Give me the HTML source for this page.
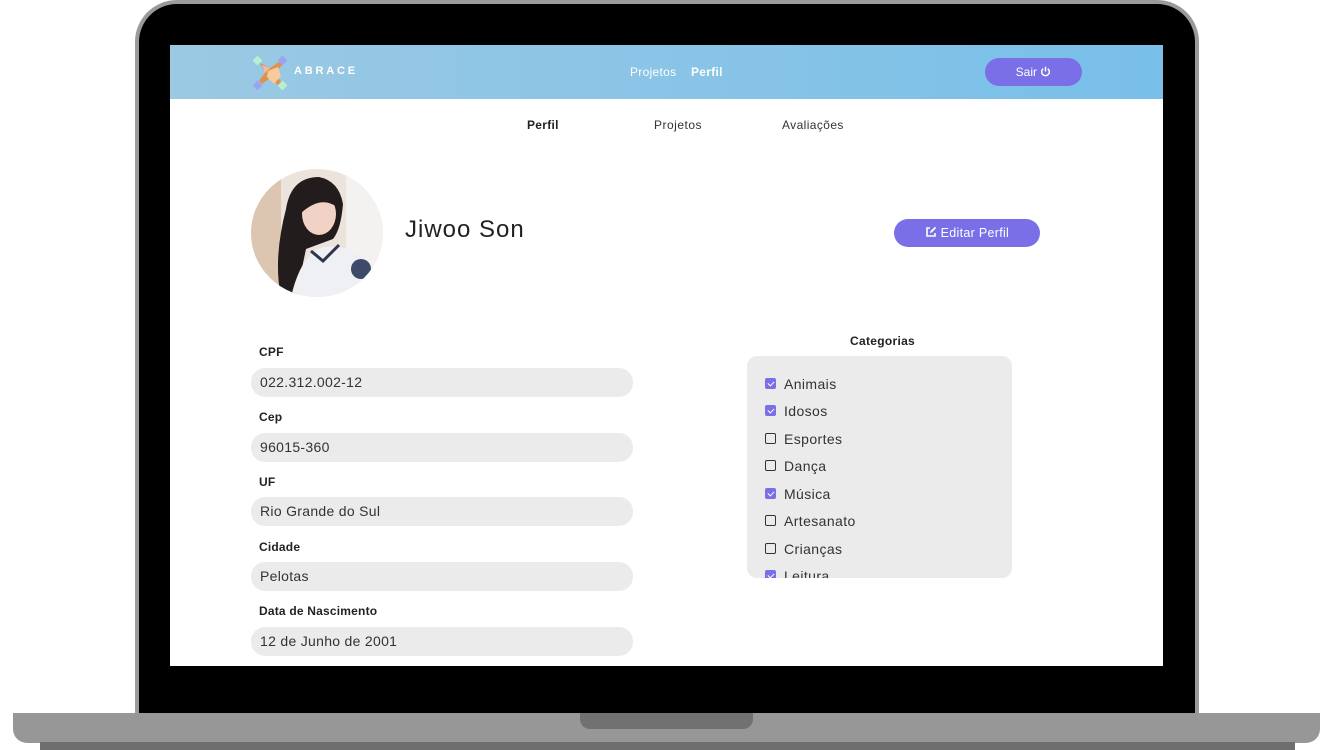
<!DOCTYPE html>
<html><head><meta charset="utf-8"><style>
*{margin:0;padding:0;box-sizing:border-box}
body{width:1333px;height:750px;background:#fff;position:relative;overflow:hidden;font-family:"Liberation Sans",sans-serif;color:#222}
.a{position:absolute}
.lbl{position:absolute;left:259px;font-size:12px;font-weight:bold;color:#222;letter-spacing:0.2px}
.inp{position:absolute;left:251px;width:382px;height:29px;border-radius:14px;background:#ebebeb;font-size:14px;color:#333;padding-left:9px;line-height:29px;letter-spacing:0.3px}
.cb{position:absolute;left:765px;width:11px;height:11px;border:1.5px solid #333;border-radius:2px}
.cb.on{background:#7b6fe8;border-color:#7b6fe8}
.cb.on:after{content:"";position:absolute;left:3px;top:1px;width:3px;height:5px;border:solid #fff;border-width:0 1px 1px 0;transform:rotate(45deg)}
.ct{position:absolute;left:784px;font-size:14px;color:#333;line-height:16px;letter-spacing:0.4px}
</style></head><body>
<div class="a" style="left:135px;top:0;width:1064px;height:720px;background:#9a9a9a;border-radius:42px 42px 0 0"></div>
<div class="a" style="left:139px;top:4px;width:1056px;height:716px;background:#000;border-radius:38px 38px 0 0"></div>
<div class="a" style="left:13px;top:713px;width:1307px;height:30px;background:#979797;border-radius:0 0 14px 14px"></div>
<div class="a" style="left:40px;top:742px;width:1255px;height:8px;background:#6e6e6e"></div>
<div class="a" style="left:580px;top:713px;width:173px;height:16px;background:#717171;border-radius:0 0 10px 10px"></div>
<div class="a" style="left:170px;top:45px;width:993px;height:621px;background:#fff;overflow:hidden">
 <div class="a" style="left:0;top:0;width:993px;height:54px;background:linear-gradient(90deg,#9bc9e3,#78bfe9)"></div>
</div>
<svg class="a" style="left:253px;top:56px" width="34" height="34" viewBox="0 0 34 34">
<rect x="1" y="1" width="7" height="7" fill="#b8f0cf" transform="rotate(45 4.5 4.5)"/>
<rect x="26" y="1" width="7" height="7" fill="#9da3f2" transform="rotate(45 29.5 4.5)"/>
<rect x="1" y="26" width="7" height="7" fill="#9da3f2" transform="rotate(45 4.5 29.5)"/>
<rect x="26" y="26" width="7" height="7" fill="#b8f0cf" transform="rotate(45 29.5 29.5)"/>
<path d="M7 7 L17 12 L26 6 L29 9 L22 17 L28 26 L25 29 L17 22 L9 28 L6 25 L12 17 Z" fill="#e0914a"/>
<path d="M9 9 L17 12 L12 17Z" fill="#f2b8a8"/>
<path d="M15 15 L25 11 L28 20 L21 28 L14 21 Z" fill="#f6cc9e"/>
</svg>
<div class="a" style="left:294px;top:65px;font-size:11px;font-weight:bold;color:#fff;letter-spacing:2.8px">ABRACE</div>
<div class="a" style="left:630px;top:65px;font-size:12px;color:#fff;letter-spacing:0.3px">Projetos</div>
<div class="a" style="left:691px;top:65px;font-size:12px;font-weight:bold;color:#fff;letter-spacing:0.3px">Perfil</div>
<div class="a" style="left:985px;top:58px;width:97px;height:28px;border-radius:14px;background:#7b6fe8;color:#fff;font-size:12px;text-align:center;line-height:28px">Sair
<svg width="11" height="11" viewBox="0 0 12 12" style="vertical-align:-1px"><path d="M3.5 3 A4.2 4.2 0 1 0 8.5 3" fill="none" stroke="#fff" stroke-width="1.6"/><path d="M6 0.8 V6" stroke="#fff" stroke-width="1.6"/></svg></div>
<div class="a" style="left:527px;top:118px;font-size:12px;font-weight:bold;letter-spacing:0.3px">Perfil</div>
<div class="a" style="left:654px;top:118px;font-size:12px;color:#333;letter-spacing:0.5px">Projetos</div>
<div class="a" style="left:782px;top:118px;font-size:12px;color:#333;letter-spacing:0.4px">Avaliações</div>
<svg class="a" style="left:251px;top:169px" width="132" height="128" viewBox="0 0 132 128">
<defs><clipPath id="c"><ellipse cx="66" cy="64" rx="66" ry="64"/></clipPath></defs>
<g clip-path="url(#c)">
<rect width="132" height="128" fill="#ece4dc"/>
<rect x="95" y="0" width="37" height="128" fill="#f3f2f0"/>
<rect x="0" y="0" width="30" height="128" fill="#dcc6b2"/>
<path d="M35 40 Q40 8 68 8 Q88 12 92 35 Q90 60 82 70 L55 80 L45 128 L30 128 Q22 90 35 40Z" fill="#231c1c"/>
<ellipse cx="68" cy="45" rx="17" ry="21" fill="#f2d2c4"/>
<path d="M48 32 Q58 14 82 22 L86 38 Q70 26 50 44Z" fill="#231c1c"/>
<path d="M40 128 Q50 85 72 78 Q112 74 128 110 L132 128Z" fill="#eef0f4"/>
<path d="M60 82 L72 92 L88 76" fill="none" stroke="#2d3550" stroke-width="3"/>
<circle cx="110" cy="100" r="10" fill="#3d4a6a"/>
</g></svg>
<div class="a" style="left:405px;top:216px;font-size:24px;color:#222;letter-spacing:1px">Jiwoo Son</div>
<div class="a" style="left:894px;top:219px;width:146px;height:28px;border-radius:14px;background:#7b6fe8;color:#fff;font-size:12.5px;text-align:center;line-height:28px;letter-spacing:0.3px">
<svg width="12" height="12" viewBox="0 0 12 12" style="vertical-align:-1px"><path d="M5 2 H2 V10 H10 V7" fill="none" stroke="#fff" stroke-width="1.6"/><path d="M5 7 L5.5 5 L10 0.8 L11.2 2 L6.8 6.5Z" fill="#fff"/></svg> Editar Perfil</div>
<div class="lbl" style="top:345px">CPF</div><div class="inp" style="top:368px">022.312.002-12</div>
<div class="lbl" style="top:410px">Cep</div><div class="inp" style="top:433px">96015-360</div>
<div class="lbl" style="top:475px">UF</div><div class="inp" style="top:497px">Rio Grande do Sul</div>
<div class="lbl" style="top:540px">Cidade</div><div class="inp" style="top:562px">Pelotas</div>
<div class="lbl" style="top:604px">Data de Nascimento</div><div class="inp" style="top:627px">12 de Junho de 2001</div>
<div class="a" style="left:850px;top:334px;font-size:12px;font-weight:bold;letter-spacing:0.3px">Categorias</div>
<div class="a" style="left:747px;top:356px;width:265px;height:222px;border-radius:10px;background:#ebebeb;overflow:hidden">
<div style="position:absolute;left:-747px;top:-356px;width:1333px;height:750px">
<div class="cb on" style="top:378px"></div><div class="ct" style="top:376px">Animais</div>
<div class="cb on" style="top:405px"></div><div class="ct" style="top:403px">Idosos</div>
<div class="cb" style="top:433px"></div><div class="ct" style="top:431px">Esportes</div>
<div class="cb" style="top:460px"></div><div class="ct" style="top:458px">Dança</div>
<div class="cb on" style="top:488px"></div><div class="ct" style="top:486px">Música</div>
<div class="cb" style="top:515px"></div><div class="ct" style="top:513px">Artesanato</div>
<div class="cb" style="top:543px"></div><div class="ct" style="top:541px">Crianças</div>
<div class="cb on" style="top:570px"></div><div class="ct" style="top:568px">Leitura</div>
</div></div>
</body></html>
